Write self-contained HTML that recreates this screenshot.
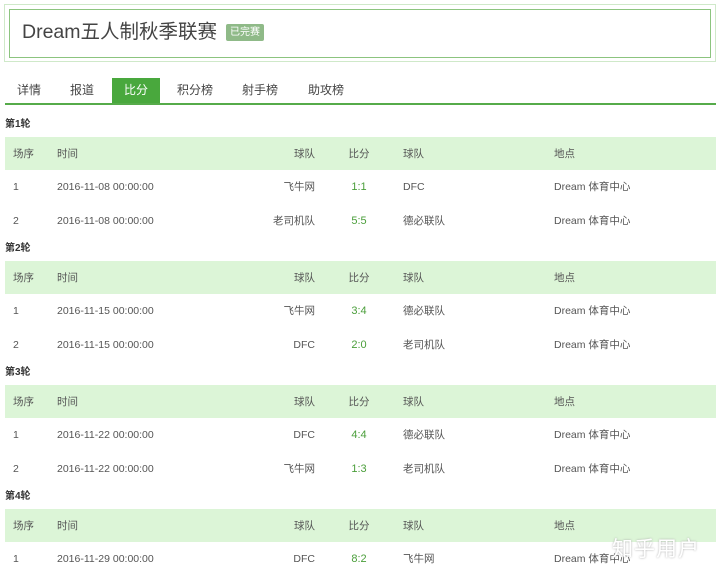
<!DOCTYPE html><html><head><meta charset="utf-8"><style>
body{margin:0;width:720px;height:573px;background:#fff;font-family:"Liberation Sans","Noto Sans CJK SC",sans-serif;color:#555;font-size:11px;position:relative;overflow:hidden}
.frame{position:absolute;left:4px;top:4px;width:710px;height:56px;border:1px solid #cfe9c9}
.box{position:absolute;left:9px;top:9px;width:700px;height:47px;border:1px solid #8cc47f}
.title{position:absolute;left:22px;top:20px;font-size:19.5px;color:#444;line-height:24px}
.badge{position:absolute;left:226px;top:24px;background:#8fba88;color:#fff;font-size:10px;line-height:13px;padding:2px 4px;border-radius:2px}
.tabs{position:absolute;left:5px;top:78px;width:711px;height:25px;border-bottom:2px solid #56ab4a}
.tab{position:absolute;top:0;height:25px;line-height:25px;font-size:12px;color:#444}
.tab.on{background:#49a83d;color:#fff;left:107px;width:48px;text-align:center}
.r{position:absolute;left:5px;font-weight:bold;font-size:10px;color:#333}
.hd{position:absolute;left:5px;width:711px;height:33px;background:#dcf5d7}
.c{position:absolute;white-space:nowrap;font-size:10.5px;line-height:14px;height:14px}
.s{color:#4a9e3a;font-size:11px}
.wm{position:absolute;left:612px;top:533px;font-size:21px;color:#fff;text-shadow:0 0 2px #aaa;letter-spacing:1px}
</style></head><body>
<div class="frame"></div><div class="box"></div>
<div class="title">Dream五人制秋季联赛</div><div class="badge">已完赛</div>
<div class="tabs">
<div class="tab" style="left:12px">详情</div><div class="tab" style="left:65px">报道</div>
<div class="tab on">比分</div><div class="tab" style="left:172px">积分榜</div>
<div class="tab" style="left:237px">射手榜</div><div class="tab" style="left:303px">助攻榜</div></div>
<div id="t"></div>
<div class="wm">知乎用户</div>
<script>
var R=[[["1","2016-11-08 00:00:00","飞牛网","1:1","DFC"],["2","2016-11-08 00:00:00","老司机队","5:5","德必联队"]],
[["1","2016-11-15 00:00:00","飞牛网","3:4","德必联队"],["2","2016-11-15 00:00:00","DFC","2:0","老司机队"]],
[["1","2016-11-22 00:00:00","DFC","4:4","德必联队"],["2","2016-11-22 00:00:00","飞牛网","1:3","老司机队"]],
[["1","2016-11-29 00:00:00","DFC","8:2","飞牛网"]]];
var h="";
function row(y,a,hd){
h+='<div class="c" style="left:13px;top:'+y+'px">'+a[0]+'</div><div class="c" style="left:57px;top:'+y+'px">'+a[1]+'</div>'+
'<div class="c" style="right:405px;top:'+y+'px">'+a[2]+'</div><div class="c'+(hd?'':' s')+'" style="left:340px;width:38px;text-align:center;top:'+y+'px">'+a[3]+'</div>'+
'<div class="c" style="left:403px;top:'+y+'px">'+a[4]+'</div><div class="c" style="left:554px;top:'+y+'px">'+(hd?'地点':'Dream 体育中心')+'</div>';}
R.forEach(function(g,i){var b=115+i*124;
h+='<div class="r" style="top:'+b+'px">第'+(i+1)+'轮</div><div class="hd" style="top:'+(b+22)+'px"></div>';
row(b+32,["场序","时间","球队","比分","球队"],1);
g.forEach(function(a,j){row(b+65+j*34,a,0)});});
document.getElementById("t").innerHTML=h;
</script></body></html>
